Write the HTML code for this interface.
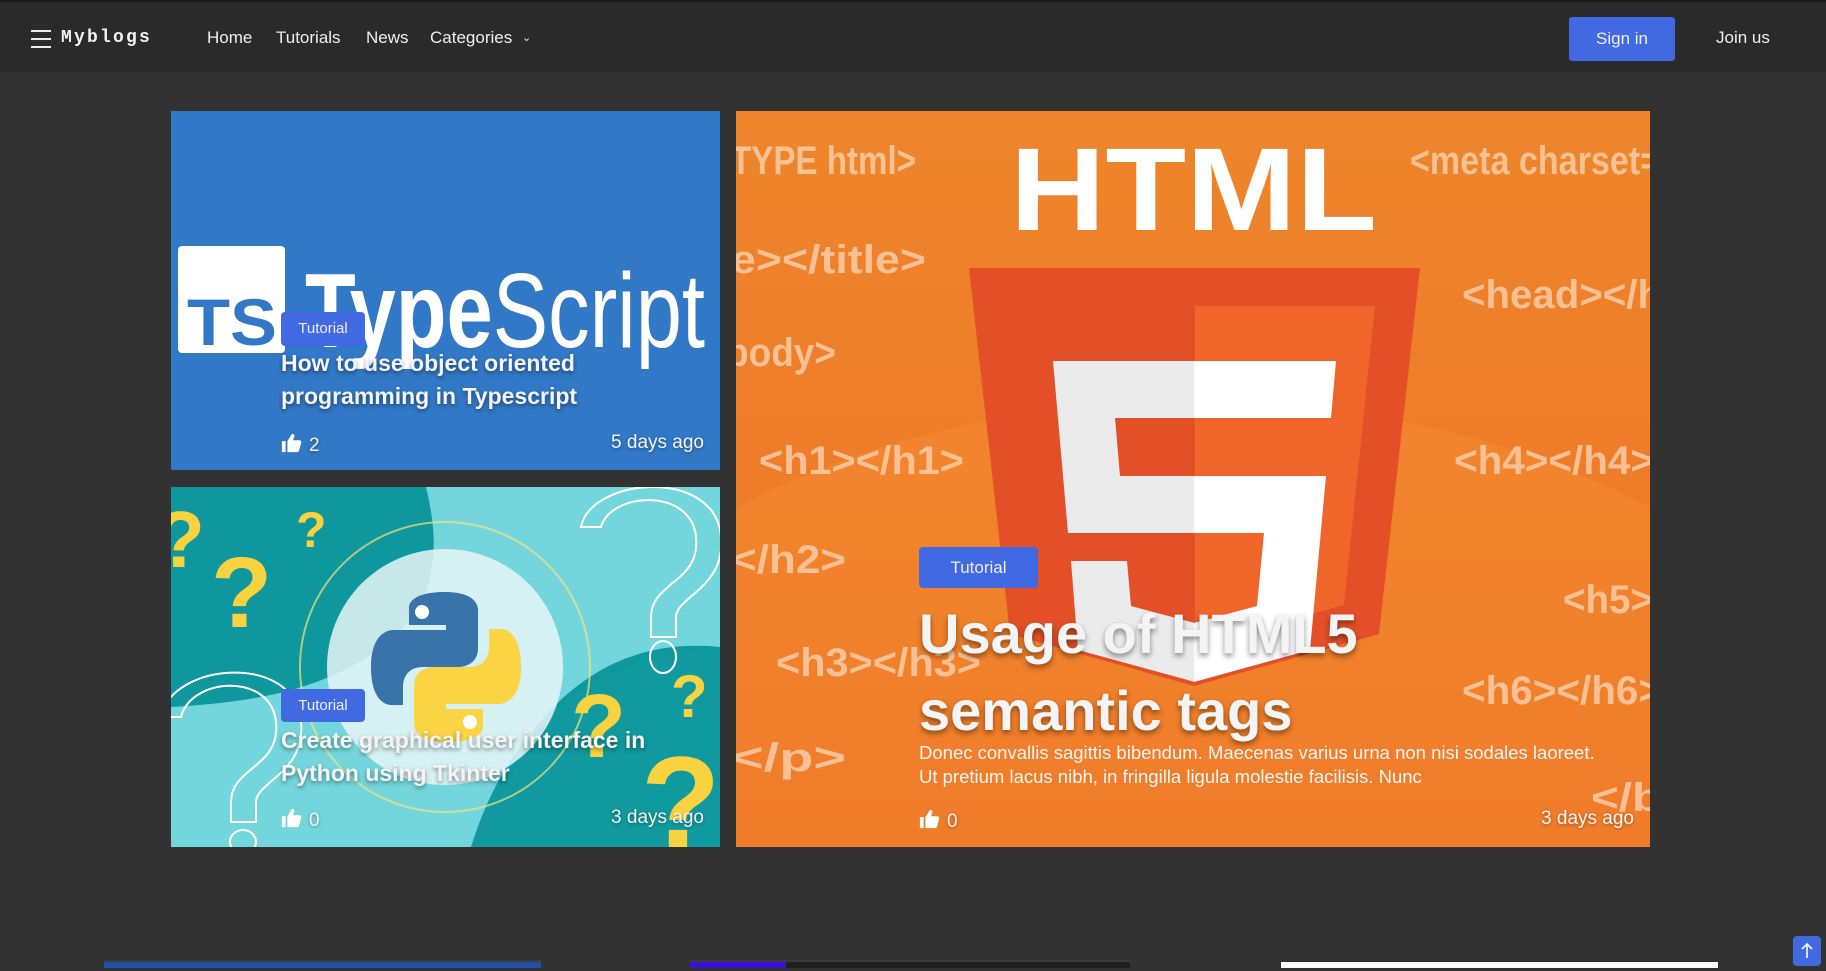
<!DOCTYPE html>
<html><head><meta charset="utf-8">
<style>
*{margin:0;padding:0;box-sizing:border-box}
html,body{width:1826px;height:968px;overflow:hidden;background:#323232;font-family:"Liberation Sans",sans-serif;color:#fff}
.nav{position:absolute;left:0;top:0;width:1826px;height:72px;background:#2a2a2a;border-top:2px solid #1a1a1a}
.nav .ham{position:absolute;left:31px;top:28px;width:20px;height:18px}
.nav .ham i{display:block;height:2px;background:#eee;margin-bottom:6px}
.logo{position:absolute;left:61px;top:26px;font-family:"Liberation Mono",monospace;font-weight:bold;font-size:18px;letter-spacing:2.2px;color:#f2f2f2}
.links a{position:absolute;top:26px;font-size:17px;color:#eee;text-decoration:none}
.signin{position:absolute;left:1569px;top:15px;width:106px;height:44px;background:#4169e1;border-radius:3px;font-size:17px;text-align:center;line-height:44px;color:#eee}
.join{position:absolute;left:1716px;top:26px;font-size:17px;color:#eee}
.card{position:absolute;overflow:hidden}
.badge{position:absolute;background:#4169e1;color:#eee;border-radius:4px;text-align:center}
.t{position:absolute;font-weight:bold;text-shadow:0 2px 4px rgba(0,0,0,.45);color:#f4f4f4}
.meta{position:absolute;font-size:19px;color:#f4f4f4;text-shadow:0 1px 3px rgba(0,0,0,.35)}
.like{display:inline-block;vertical-align:-3px;margin-right:6px}
</style></head><body>
<div class="nav">
 <div class="ham"><i></i><i></i><i></i></div>
 <div class="logo">Myblogs</div>
 <div class="links"><a style="left:207px">Home</a><a style="left:276px">Tutorials</a><a style="left:366px">News</a><a style="left:430px">Categories <span style="font-size:11px;vertical-align:2px;margin-left:5px">&#8964;</span></a></div>
 <div class="signin">Sign in</div>
 <div class="join">Join us</div>
</div>

<div class="card" style="left:171px;top:111px;width:549px;height:359px;background:#3178c6">
 <svg width="549" height="359" style="position:absolute;left:0;top:0">
  <rect x="7" y="135" width="107" height="107" rx="4" fill="#fff"/>
  <text x="16" y="234" font-family="Liberation Sans,sans-serif" font-weight="bold" font-size="66" fill="#3178c6" textLength="90" lengthAdjust="spacingAndGlyphs">TS</text>
  <text x="134" y="236" font-family="Liberation Sans,sans-serif" font-size="106" fill="#fff" textLength="400" lengthAdjust="spacingAndGlyphs"><tspan font-weight="bold">Type</tspan>Script</text>
 </svg>
 <div class="badge" style="left:110px;top:201px;width:84px;height:34px;line-height:34px;font-size:15px">Tutorial</div>
 <div class="t" style="left:110px;top:236px;width:420px;font-size:23px;line-height:33px">How to use object oriented programming in Typescript</div>
 <div class="meta" style="left:110px;top:321px"><svg class="like" width="22" height="22" viewBox="0 0 24 24"><path fill="#fff" d="M1 10h4v12H1zM7 10l5-8c2 0 3 1 2.5 3L13 9h7c1.5 0 2.5 1.3 2 2.8l-2.3 8.5c-.3 1-1.2 1.7-2.2 1.7H7z"/></svg>2</div>
 <div class="meta" style="right:16px;top:321px">5 days ago</div>
</div>

<div class="card" style="left:171px;top:487px;width:549px;height:360px;background:#0e979c">
 <svg width="549" height="360" style="position:absolute;left:0;top:0" viewBox="0 0 549 360">
  <path d="M255 0 L549 0 L549 160 C450 150 360 200 300 360 L0 360 L0 220 C90 215 190 200 250 120 C270 70 262 30 255 0Z" fill="#73d6dc"/>
  <path d="M300 360 C340 230 430 165 549 160 L549 360Z" fill="#10999e"/>
  <circle cx="274" cy="180" r="118" fill="#e8f6f7" opacity=".85"/>
  <circle cx="274" cy="180" r="145" fill="none" stroke="#f3e27a" stroke-width="2" opacity=".7"/>
  <g transform="translate(200,105)">
   <path d="M74 0c-38 0-36 16-36 16v17h37v5H23S0 36 0 75s20 38 20 38h12V95s-1-20 20-20h36s19 0 19-19V19S110 0 74 0z" fill="#3873a9"/>
   <circle cx="51" cy="20" r="7" fill="#fff"/>
   <path d="M76 150c38 0 36-16 36-16v-17H75v-5h52s23 2 23-37-20-38-20-38h-12v18s1 20-20 20H62s-19 0-19 19v37s-3 19 33 19z" fill="#fbd443"/>
   <circle cx="99" cy="130" r="7" fill="#fff"/>
  </g>
  <g font-family="Liberation Sans,sans-serif" font-weight="bold" fill="#f8d23f">
   <text x="40" y="140" font-size="100">?</text>
   <text x="125" y="60" font-size="50">?</text>
   <text x="-15" y="80" font-size="80">?</text>
   <text x="400" y="270" font-size="90">?</text>
   <text x="500" y="230" font-size="60">?</text>
   <text x="470" y="360" font-size="130">?</text>
  </g>
  <g fill="none" stroke="#fff" stroke-width="2">
   <path d="M430 40 C440 5 520 0 525 50 C530 95 480 95 480 130 L480 150 L505 150 L505 130 C505 110 555 100 550 50 C545 -20 420 -10 410 40Z"/>
   <ellipse cx="492" cy="170" rx="13" ry="16"/>
   <path d="M10 230 C20 190 100 185 105 235 C110 280 60 280 60 315 L60 335 L85 335 L85 315 C85 295 135 285 130 235 C125 165 0 175 -10 230Z"/>
   <ellipse cx="72" cy="355" rx="13" ry="12"/>
  </g>
 </svg>
 <div class="badge" style="left:110px;top:202px;width:84px;height:33px;line-height:33px;font-size:15px">Tutorial</div>
 <div class="t" style="left:110px;top:237px;width:430px;font-size:23px;line-height:33px">Create graphical user interface in Python using Tkinter</div>
 <div class="meta" style="left:110px;top:320px"><svg class="like" width="22" height="22" viewBox="0 0 24 24"><path fill="#fff" d="M1 10h4v12H1zM7 10l5-8c2 0 3 1 2.5 3L13 9h7c1.5 0 2.5 1.3 2 2.8l-2.3 8.5c-.3 1-1.2 1.7-2.2 1.7H7z"/></svg>0</div>
 <div class="meta" style="right:16px;top:320px">3 days ago</div>
</div>

<div class="card" style="left:736px;top:111px;width:914px;height:736px;background:linear-gradient(#ee852b,#ef7a27 60%,#ec6a22)">
 <svg width="914" height="736" viewBox="0 0 914 736" style="position:absolute;left:0;top:0">
  <ellipse cx="457" cy="760" rx="720" ry="470" fill="#f28a30" opacity=".55"/>
  <g font-family="Liberation Sans,sans-serif" font-weight="bold" font-size="40" fill="#f9c8a0" opacity=".9">
   <text x="-5" y="63" textLength="185" lengthAdjust="spacingAndGlyphs">TYPE html&gt;</text>
   <text x="674" y="63" textLength="250" lengthAdjust="spacingAndGlyphs">&lt;meta charset=</text>
   <text x="-5" y="162" textLength="195" lengthAdjust="spacingAndGlyphs">e&gt;&lt;/title&gt;</text>
   <text x="726" y="197" textLength="200" lengthAdjust="spacingAndGlyphs">&lt;head&gt;&lt;/h</text>
   <text x="-10" y="255" textLength="110" lengthAdjust="spacingAndGlyphs">body&gt;</text>
   <text x="23" y="363" textLength="205" lengthAdjust="spacingAndGlyphs">&lt;h1&gt;&lt;/h1&gt;</text>
   <text x="718" y="363" textLength="200" lengthAdjust="spacingAndGlyphs">&lt;h4&gt;&lt;/h4&gt;</text>
   <text x="-5" y="462" textLength="115" lengthAdjust="spacingAndGlyphs">&lt;/h2&gt;</text>
   <text x="827" y="502" textLength="90" lengthAdjust="spacingAndGlyphs">&lt;h5&gt;</text>
   <text x="40" y="565" textLength="205" lengthAdjust="spacingAndGlyphs">&lt;h3&gt;&lt;/h3&gt;</text>
   <text x="726" y="593" textLength="200" lengthAdjust="spacingAndGlyphs">&lt;h6&gt;&lt;/h6&gt;</text>
   <text x="-5" y="660" textLength="115" lengthAdjust="spacingAndGlyphs">&lt;/p&gt;</text>
   <text x="855" y="700" textLength="70" lengthAdjust="spacingAndGlyphs">&lt;/b</text>
  </g>
  <text x="274" y="119" font-family="Liberation Sans,sans-serif" font-weight="bold" font-size="118" fill="#fff" textLength="367" lengthAdjust="spacingAndGlyphs">HTML</text>
  <g transform="translate(203,63)">
   <path d="M71,460 L30,94 481,94 440,460 255,512Z" fill="#e34f26"/>
   <path d="M256,472 L405,431 436,132 256,132Z" fill="#ef652a"/>
   <path d="M256,302 L181,302 176,244 256,244 256,187 114,187 129,359 256,359Z" fill="#ebebeb"/>
   <path d="M256,449 L192,432 188,387 132,387 139,476 256,508Z" fill="#ebebeb"/>
   <path d="M255,302 L255,359 325,359 318,432 255,449 255,508 371,476 387,302Z" fill="#fff"/>
   <path d="M255,187 L255,244 392,244 397,187Z" fill="#fff"/>
  </g>
 </svg>
 <div class="badge" style="left:183px;top:436px;width:119px;height:41px;line-height:41px;font-size:17px">Tutorial</div>
 <div class="t" style="left:183px;top:484px;width:500px;font-size:56px;line-height:77px;text-shadow:0 3px 6px rgba(0,0,0,.45)">Usage of HTML5 semantic tags</div>
 <div style="position:absolute;left:183px;top:630px;width:684px;font-size:18.5px;line-height:24px;color:#f6f6f6">Donec convallis sagittis bibendum. Maecenas varius urna non nisi sodales laoreet. Ut pretium lacus nibh, in fringilla ligula molestie facilisis. Nunc</div>
 <div class="meta" style="left:183px;top:697px"><svg class="like" width="22" height="22" viewBox="0 0 24 24"><path fill="#fff" d="M1 10h4v12H1zM7 10l5-8c2 0 3 1 2.5 3L13 9h7c1.5 0 2.5 1.3 2 2.8l-2.3 8.5c-.3 1-1.2 1.7-2.2 1.7H7z"/></svg>0</div>
 <div class="meta" style="right:16px;top:697px">3 days ago</div>
</div>

<div style="position:absolute;left:104px;top:960px;width:437px;height:8px;background:#1f50a8;border-top:2px solid #3c3c3c"></div>
<div style="position:absolute;left:690px;top:960px;width:440px;height:8px;background:#202020;border-top:2px solid #3c3c3c"><div style="width:96px;height:6px;background:#3a12d4"></div></div>
<div style="position:absolute;left:1281px;top:962px;width:437px;height:6px;background:#fff"></div>
<div style="position:absolute;left:1793px;top:936px;width:28px;height:30px;background:#4169e1;border-radius:4px">
 <svg width="28" height="30" viewBox="0 0 28 30"><path d="M14 22V8M9 13l5-5 5 5" stroke="#fff" stroke-width="1.6" fill="none"/></svg>
</div>
</body></html>
